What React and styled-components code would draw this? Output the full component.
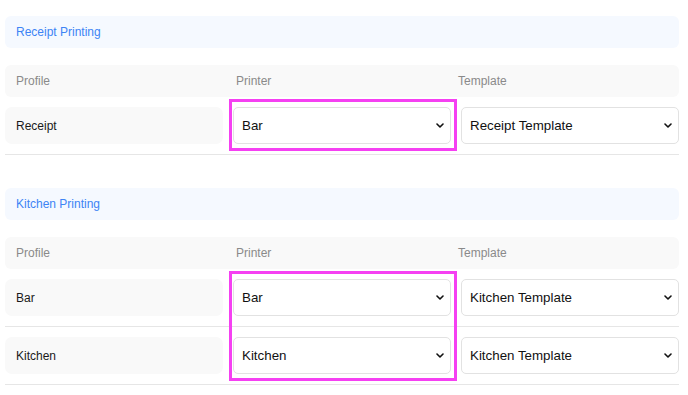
import React from "react";
import styled, { createGlobalStyle } from "styled-components";

const sections = [
    {
        title: "Receipt Printing",
        rows: [{ profile: "Receipt", printer: "Bar", template: "Receipt Template" }],
    },
    {
        title: "Kitchen Printing",
        rows: [
            { profile: "Bar", printer: "Bar", template: "Kitchen Template" },
            { profile: "Kitchen", printer: "Kitchen", template: "Kitchen Template" },
        ],
    },
];

const printers = ["Bar", "Kitchen", "Receipt"];
const templates = ["Receipt Template", "Kitchen Template"];

function Chevron() {
    return (
        <ChevronIcon width="8" height="5" viewBox="0 0 8 5">
            <path d="M1 1l3 3 3-3" fill="none" stroke="#111" strokeWidth="1.6" strokeLinecap="round" strokeLinejoin="round" />
        </ChevronIcon>
    );
}

function Picker({ value, options, row, col }) {
    return (
        <SelectBox $row={row} $col={col}>
            <NativeSelect defaultValue={value}>
                {options.map(o => <option key={o}>{o}</option>)}
            </NativeSelect>
            <Chevron />
        </SelectBox>
    );
}

export default function App() {
    return (
        <>
            <GlobalStyle />
            <Page>
                {sections.map(s => (
                    <Section key={s.title}>
                        <Title>{s.title}</Title>
                        <HeaderRow>
                            <span>Profile</span>
                            <span>Printer</span>
                            <span>Template</span>
                        </HeaderRow>
                        <Body>
                            {s.rows.map((r, i) => (
                                <React.Fragment key={r.profile}>
                                    <ProfileCell $row={i * 2 + 1}>{r.profile}</ProfileCell>
                                    <Picker value={r.printer} options={printers} row={i * 2 + 1} col={2} />
                                    <Picker value={r.template} options={templates} row={i * 2 + 1} col={3} />
                                    <Divider $row={i * 2 + 2} />
                                </React.Fragment>
                            ))}
                            <Highlight $span={s.rows.length * 2} />
                        </Body>
                    </Section>
                ))}
            </Page>
        </>
    );
}

const GlobalStyle = createGlobalStyle`
    body{
        margin: 0;
        background: #ffffff;
        font-family: "Liberation Sans", Arial, sans-serif;
    }
`;
const Page = styled.div`
    width: 674px;
    box-sizing: border-box;
    padding-top: 16px;
    margin-left: 5px;
    display: flex;
    flex-direction: column;
    gap: 33px;
`;
const Section = styled.section`
    display: flex;
    flex-direction: column;
`;
const Title = styled.div`
    height: 32px;
    display: flex;
    align-items: center;
    box-sizing: border-box;
    padding-left: 11px;
    background: #f5f9ff;
    border-radius: 6px;
    font-size: 12px;
    color: #3d84f5;
    margin-bottom: 17px;
`;
const HeaderRow = styled.div`
    height: 32px;
    display: grid;
    grid-template-columns: 220px 222px 232px;
    align-items: center;
    background: #f9f9f9;
    border-radius: 6px;
    font-size: 12px;
    color: #8a8a8a;
    span{
        padding-left: 11px;
    }
`;
const Body = styled.div`
    display: grid;
    grid-template-columns: 218px 218px 218px;
    column-gap: 10px;
`;
const ProfileCell = styled.div`
    grid-column: 1;
    grid-row: ${p => p.$row};
    height: 37px;
    margin: 10px 0;
    display: flex;
    align-items: center;
    box-sizing: border-box;
    padding-left: 11px;
    background: #f9f9f9;
    border-radius: 7px;
    font-size: 12px;
    color: #1a1a1a;
`;
const SelectBox = styled.div`
    grid-column: ${p => p.$col};
    grid-row: ${p => p.$row};
    height: 37px;
    margin: 10px 0;
    display: flex;
    align-items: center;
    box-sizing: border-box;
    padding-right: 6px;
    background: #ffffff;
    border: 1px solid #e2e2e2;
    border-radius: 5px;
`;
const NativeSelect = styled.select`
    flex: 1;
    height: 100%;
    appearance: none;
    border: none;
    outline: none;
    background: transparent;
    padding: 0 0 0 8px;
    font-family: "Liberation Sans", Arial, sans-serif;
    font-size: 13.33px;
    color: #111111;
`;
const ChevronIcon = styled.svg`
    flex-shrink: 0;
    pointer-events: none;
`;
const Divider = styled.div`
    grid-column: 1 / -1;
    grid-row: ${p => p.$row};
    height: 1px;
    background: #e6e6e6;
`;
const Highlight = styled.div`
    grid-column: 2;
    grid-row: 1 / span ${p => p.$span};
    margin: 2px -6px 4px -4px;
    border: 3px solid #f540f2;
    pointer-events: none;
`;
